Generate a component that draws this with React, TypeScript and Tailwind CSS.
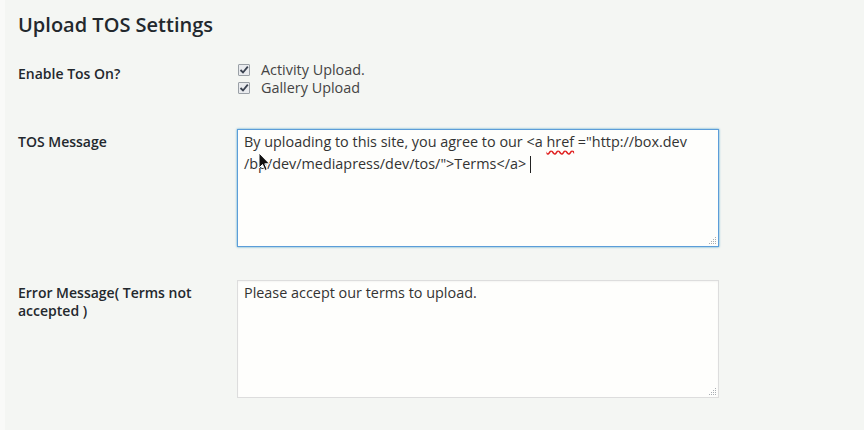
const Check = () => (
  <span className="flex h-[12px] w-[12px] items-center justify-center rounded-[1px] border border-[#9aa0a6] bg-[#e9ebee]">
    <svg width="10" height="10" viewBox="0 0 10 10">
      <path d="M1.5 5 L4 7.5 L8.8 1.6" fill="none" stroke="#3a4250" strokeWidth="1.8" />
    </svg>
  </span>
);

const Grip = () => (
  <svg className="absolute bottom-[1px] right-[1px]" width="10" height="10" viewBox="0 0 10 10">
    {[
      [8, 2], [6, 4], [8, 4], [4, 6], [6, 6], [8, 6], [2, 8], [4, 8], [6, 8], [8, 8],
    ].map(([x, y], i) => (
      <rect key={i} x={x} y={y} width="1" height="1" fill="#a8adb2" />
    ))}
  </svg>
);

const Pointer = () => (
  <svg className="absolute left-[20px] top-[22px]" width="13" height="20" viewBox="0 0 13 20">
    <path d="M1 1 L1 16 L4.5 12.5 L7 18.5 L9.2 17.5 L6.8 11.8 L11.5 11.8 Z" fill="#111" stroke="#fff" strokeWidth="1" />
  </svg>
);

export default function App() {
  return (
    <div
      className="flex h-[430px] w-[864px] bg-[#f4f6f3] text-[#333] antialiased"
      style={{ fontFamily: '"Open Sans", "Noto Sans", sans-serif' }}
    >
      <div className="w-[5px] shrink-0 bg-[#f9faf8]" />
      <div className="flex-1 pl-[13px]">
        <h2 className="mt-[11px] text-[20px] font-semibold leading-[28px] text-[#23282d]">
          Upload TOS Settings
        </h2>

        <div className="mt-[23px] grid grid-cols-[219px_482px]">
          <div className="pt-[3px] text-[14px] font-semibold leading-[18px] text-[#23282d]">
            Enable Tos On?
          </div>
          <div className="-mt-[1px] flex flex-col pl-[1px] text-[14.4px] leading-[18px] text-[#444]">
            <label className="flex items-center gap-[11px]">
              <Check />
              Activity Upload.
            </label>
            <label className="flex items-center gap-[11px]">
              <Check />
              Gallery Upload
            </label>
          </div>

          <div className="mt-[32px] pt-[4px] text-[14px] font-semibold leading-[18px] text-[#23282d]">
            TOS Message
          </div>
          <div className="mt-[32px]">
            <div className="relative h-[118px] border border-[#5b9dd9] bg-[#fefefc] px-[6px] pt-[2px] text-[14.4px] leading-[20px] text-[#333] shadow-[0_0_2px_rgba(30,140,190,0.8)]">
              By uploading to this site, you agree to our &lt;a{" "}
              <span className="underline decoration-[#e02020] decoration-wavy underline-offset-[3px]">href</span>{" "}
              ="http://box.dev
              <br />
              /bp/dev/mediapress/dev/tos/"&gt;Terms&lt;/a&gt;{" "}
              <span className="inline-block h-[17px] w-[1px] translate-y-[4px] bg-[#222]" />
              <Pointer />
              <Grip />
            </div>
          </div>

          <div className="mt-[33px] pr-[10px] pt-[4px] text-[14px] font-semibold leading-[18px] text-[#23282d]">
            Error Message( Terms not accepted )
          </div>
          <div className="mt-[33px]">
            <div className="relative h-[118px] border border-[#dddddd] bg-[#fefefc] px-[6px] pt-[2px] text-[14.4px] leading-[20px] text-[#333] shadow-[inset_0_1px_2px_rgba(0,0,0,0.04)]">
              Please accept our terms to upload.
              <Grip />
            </div>
          </div>
        </div>
      </div>
    </div>
  );
}
